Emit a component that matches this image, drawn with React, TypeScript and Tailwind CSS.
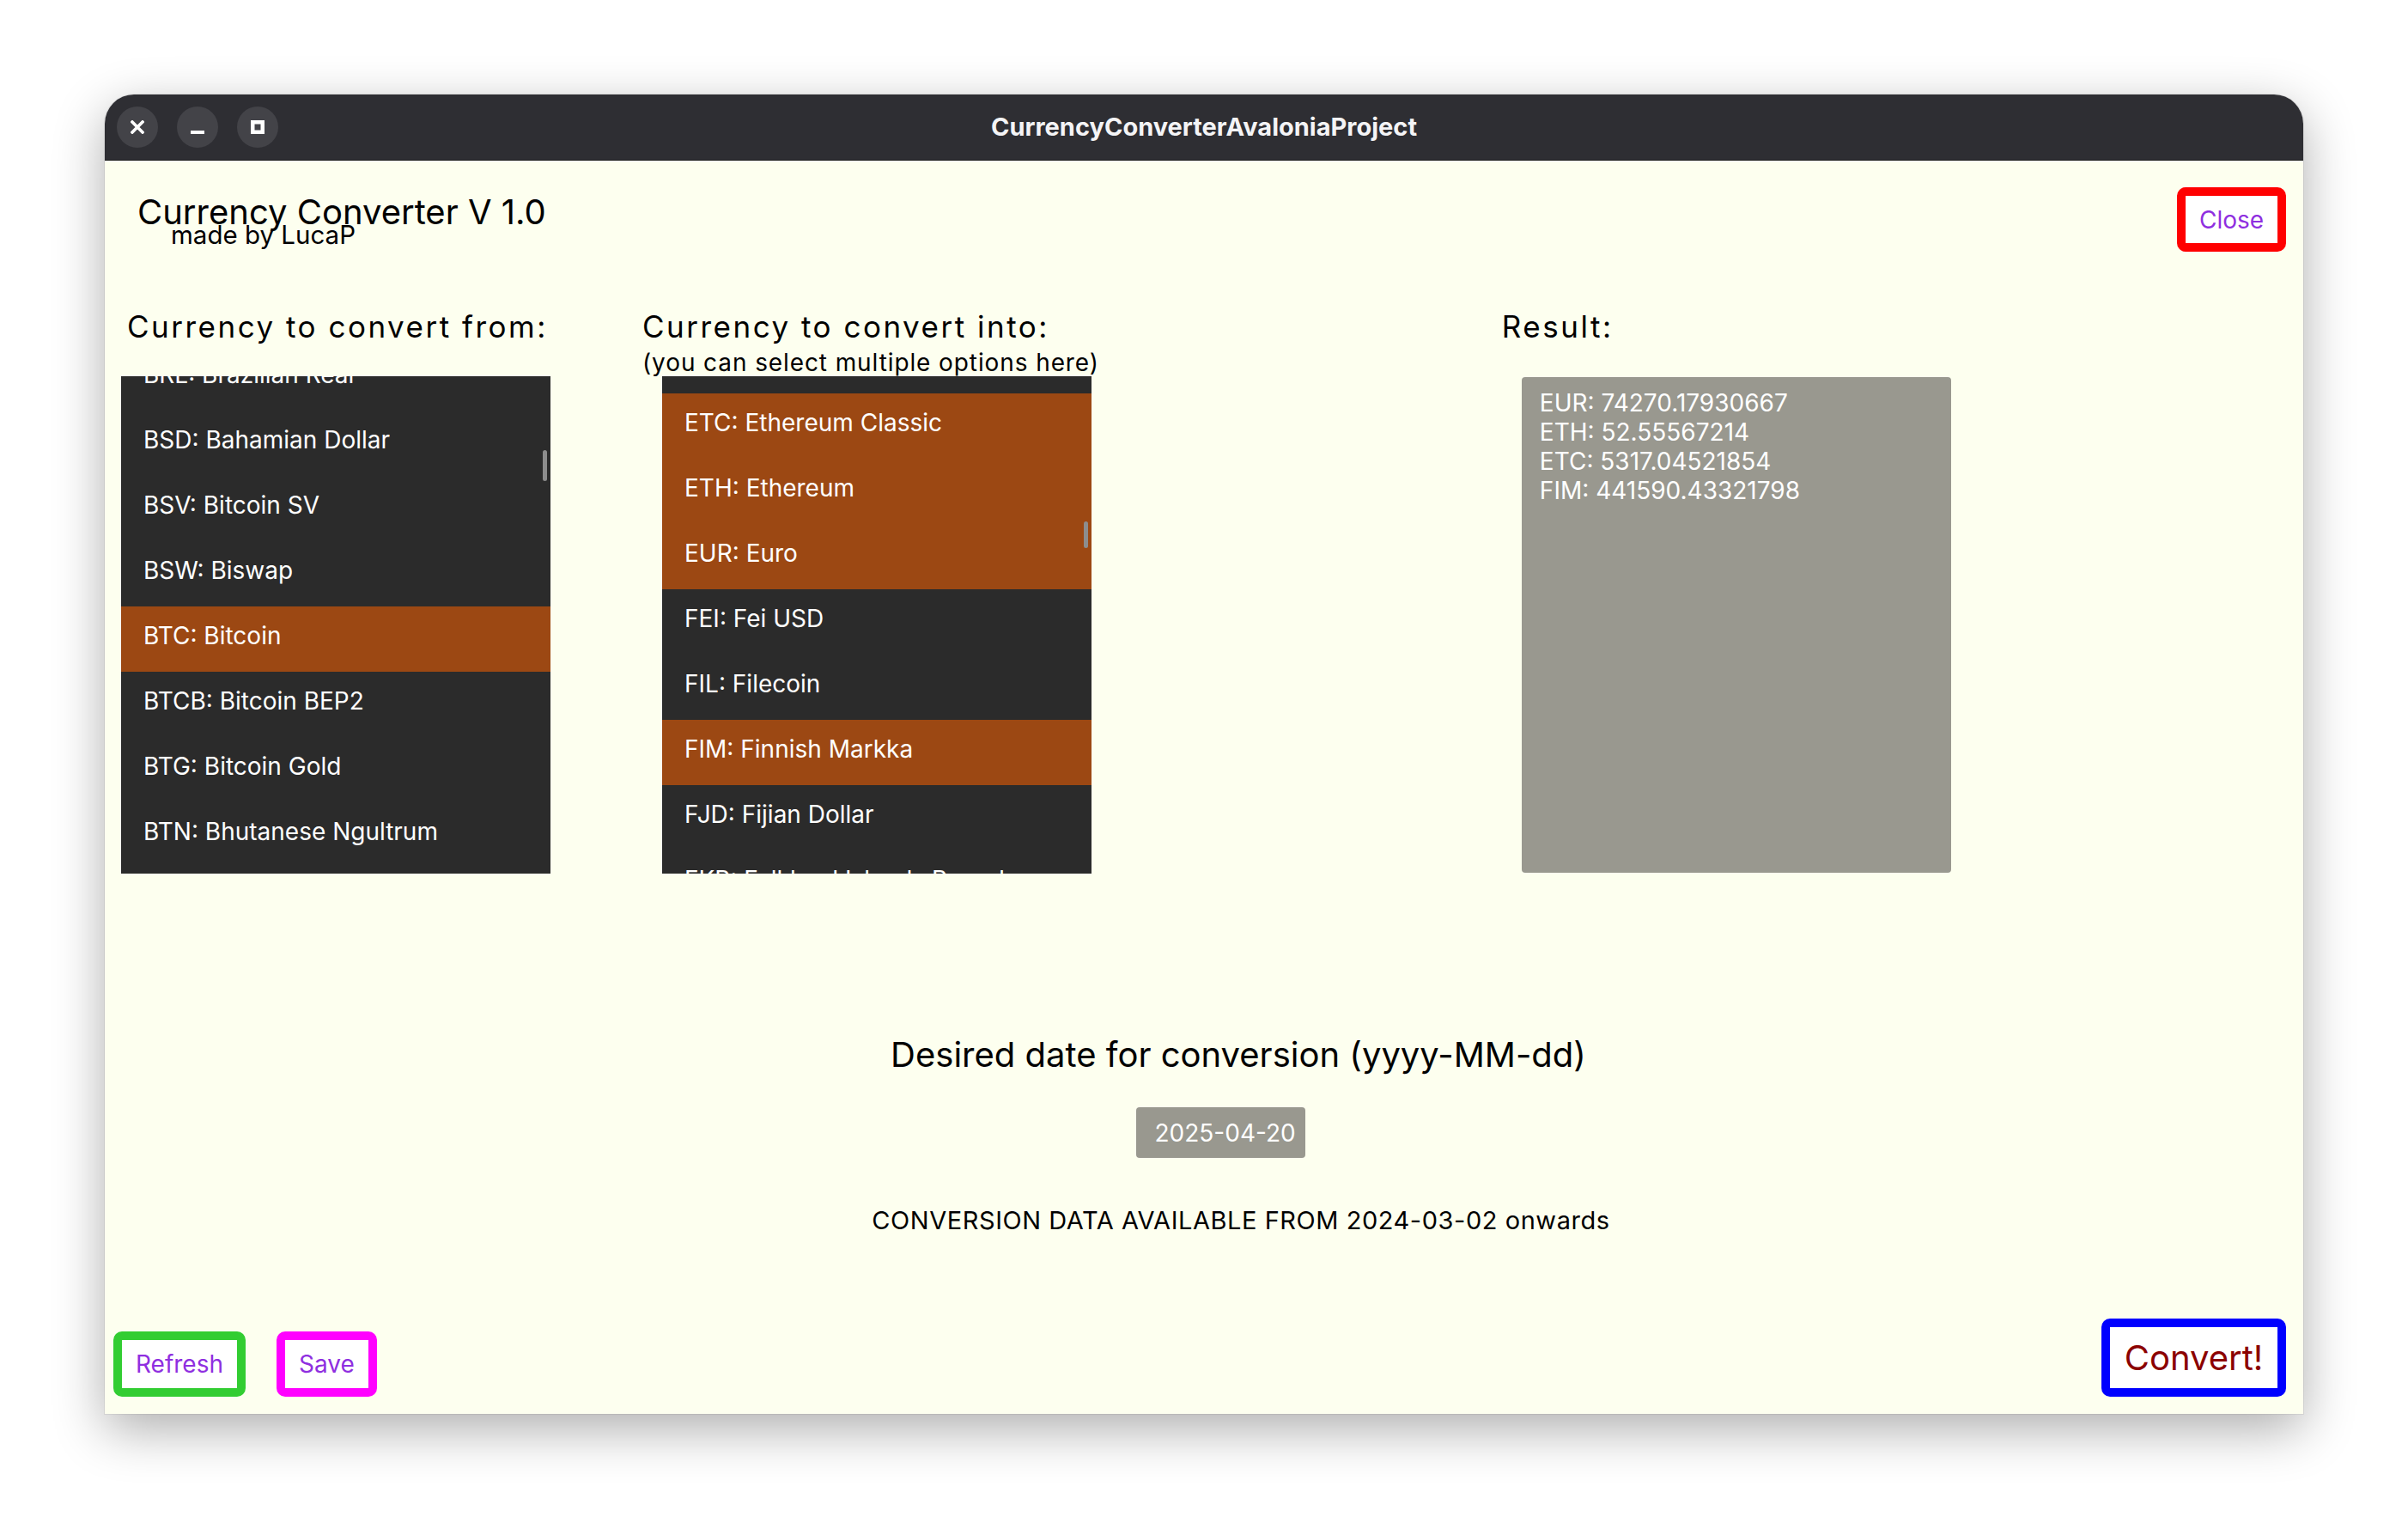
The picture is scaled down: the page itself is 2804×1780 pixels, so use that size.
import React from "react";

const fromRows = [
  { label: "BRL: Brazilian Real", selected: false },
  { label: "BSD: Bahamian Dollar", selected: false },
  { label: "BSV: Bitcoin SV", selected: false },
  { label: "BSW: Biswap", selected: false },
  { label: "BTC: Bitcoin", selected: true },
  { label: "BTCB: Bitcoin BEP2", selected: false },
  { label: "BTG: Bitcoin Gold", selected: false },
  { label: "BTN: Bhutanese Ngultrum", selected: false },
  { label: "BTT: BitTorrent", selected: false },
];

const intoRows = [
  { label: "ETB: Ethiopian Birr", selected: false },
  { label: "ETC: Ethereum Classic", selected: true },
  { label: "ETH: Ethereum", selected: true },
  { label: "EUR: Euro", selected: true },
  { label: "FEI: Fei USD", selected: false },
  { label: "FIL: Filecoin", selected: false },
  { label: "FIM: Finnish Markka", selected: true },
  { label: "FJD: Fijian Dollar", selected: false },
  { label: "FKP: Falkland Islands Pound", selected: false },
];

const results = [
  "EUR: 74270.17930667",
  "ETH: 52.55567214",
  "ETC: 5317.04521854",
  "FIM: 441590.43321798",
];

function CurrencyList({
  rows,
  offset,
  thumbTop,
  thumbHeight,
}: {
  rows: { label: string; selected: boolean }[];
  offset: string;
  thumbTop: string;
  thumbHeight: string;
}) {
  return (
    <div className="relative h-[579px] w-[500px] overflow-hidden bg-[#2b2b2b]">
      <div className={offset}>
        {rows.map((row) => (
          <div
            key={row.label}
            className={`flex h-[76px] items-center pb-[8px] pl-[26px] text-[28px] leading-[34px] text-white ${
              row.selected ? "bg-[#9c4813]" : ""
            }`}
          >
            {row.label}
          </div>
        ))}
      </div>
      <div className={`absolute right-[4px] w-[5px] rounded-full bg-[#8d8d8d] ${thumbTop} ${thumbHeight}`} />
    </div>
  );
}

function OutlineButton({
  label,
  className,
}: {
  label: string;
  className: string;
}) {
  return (
    <button className={`flex items-center justify-center rounded-[10px] border-[10px] bg-white ${className}`}>
      {label}
    </button>
  );
}

export default function App() {
  return (
    <div
      className="min-h-[1780px] w-[2804px] bg-white pl-[122px] pt-[110px]"
      style={{ fontFamily: "Inter, 'Noto Sans', sans-serif" }}
    >
      <div className="flex h-[1536px] w-[2560px] flex-col overflow-hidden rounded-t-[34px] shadow-[0_18px_60px_rgba(0,0,0,0.32),0_0_0_1px_rgba(0,0,0,0.06)]">
        {/* title bar */}
        <div className="relative flex h-[77px] shrink-0 items-center border-b border-[#1b1b1d] bg-[#2e2e33] pl-[14px]">
          <div className="flex gap-[22px]">
            <span className="grid size-[48px] place-items-center rounded-full bg-[#434348]">
              <svg width="16" height="16" viewBox="0 0 16 16">
                <path d="M2 2 L14 14 M14 2 L2 14" stroke="#fff" strokeWidth="3.6" strokeLinecap="square" />
              </svg>
            </span>
            <span className="grid size-[48px] place-items-center rounded-full bg-[#434348]">
              <svg width="16" height="16" viewBox="0 0 16 16">
                <rect x="0" y="12" width="16" height="4" fill="#fff" />
              </svg>
            </span>
            <span className="grid size-[48px] place-items-center rounded-full bg-[#434348]">
              <svg width="16" height="16" viewBox="0 0 16 16">
                <rect x="2.25" y="2.25" width="11.5" height="11.5" fill="none" stroke="#fff" strokeWidth="4.5" />
              </svg>
            </span>
          </div>
          <div className="absolute inset-x-0 top-0 flex h-[76px] items-center justify-center text-[29px] font-bold text-[#f4f4f6]">
            CurrencyConverterAvaloniaProject
          </div>
        </div>

        {/* content */}
        <div className="flex flex-1 flex-col bg-[#fdffef] text-black">
          <div className="flex h-[173px] items-start justify-between">
            <div className="ml-[38px] mt-[36px]">
              <div className="text-[40px] leading-[48px]">Currency Converter V 1.0</div>
              <div className="-mt-[15px] ml-[39px] text-[29.5px] leading-[34px]">made by LucaP</div>
            </div>
            <OutlineButton
              label="Close"
              className="mr-[20px] mt-[31px] h-[75px] w-[127px] border-[#ff0000] text-[28px] text-[#8f2fe0]"
            />
          </div>

          <div className="flex items-start">
            <div className="ml-[19px] flex w-[500px] flex-col">
              <div className="ml-[7px] h-[78px] text-[35px] leading-[41px] tracking-[2.5px]">
                Currency to convert from:
              </div>
              <CurrencyList rows={fromRows} offset="-mt-[36px]" thumbTop="top-[86px]" thumbHeight="h-[36px]" />
            </div>

            <div className="ml-[107px] flex flex-col">
              <div className="h-[78px]">
                <div className="text-[35px] leading-[41px] tracking-[2.5px]">Currency to convert into:</div>
                <div className="mt-[4px] text-[28px] leading-[34px] tracking-[0.9px]">
                  (you can select multiple options here)
                </div>
              </div>
              <div className="ml-[23px]">
                <CurrencyList rows={intoRows} offset="-mt-[56px]" thumbTop="top-[169px]" thumbHeight="h-[31px]" />
              </div>
            </div>

            <div className="ml-[469px] flex flex-col">
              <div className="h-[79px] text-[35px] leading-[41px] tracking-[2.5px]">Result:</div>
              <div className="ml-[23px] h-[577px] w-[500px] rounded-[4px] bg-[#99988f] pl-[21px] pt-[13px] text-[28px] leading-[34px] text-white">
                {results.map((line) => (
                  <div key={line}>{line}</div>
                ))}
              </div>
            </div>
          </div>

          <div className="mt-[187px] flex flex-col items-center">
            <div className="ml-[80px] text-[40px] leading-[48px]">Desired date for conversion (yyyy-MM-dd)</div>
            <div className="ml-[38px] mt-[37px] flex h-[59px] w-[197px] items-center rounded-[4px] bg-[#99988f] pl-[22px] text-[28px] text-white">
              2025-04-20
            </div>
            <div className="ml-[86px] mt-[56px] text-[29px] leading-[34px] tracking-[0.55px]">
              CONVERSION DATA AVAILABLE FROM 2024-03-02 onwards
            </div>
          </div>

          <div className="mt-auto flex items-end justify-between pb-[20px]">
            <div className="ml-[10px] flex gap-[36px]">
              <OutlineButton
                label="Refresh"
                className="h-[76px] w-[154px] border-[#32cd32] text-[28px] text-[#8f2fe0]"
              />
              <OutlineButton
                label="Save"
                className="h-[76px] w-[117px] border-[#ff00ff] text-[28px] text-[#8f2fe0]"
              />
            </div>
            <OutlineButton
              label="Convert!"
              className="mr-[20px] h-[91px] w-[215px] border-[#0000ff] text-[40px] text-[#8b0000]"
            />
          </div>
        </div>
      </div>
    </div>
  );
}
